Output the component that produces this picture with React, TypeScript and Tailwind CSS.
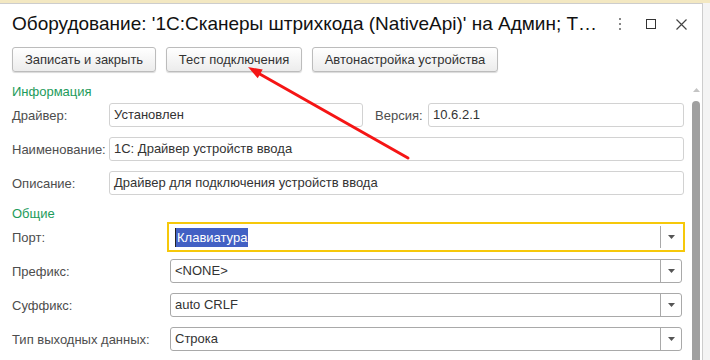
import React from 'react'

const labelCls = 'text-[13px] text-[#4d4d4d] leading-[15px]'

function TextField({ value, className }: { value: string; className: string }) {
  return (
    <div
      className={`h-[24px] flex items-center px-[4px] border border-[#d2d2d2] rounded-[3px] bg-white text-[13px] text-[#333] ${className}`}
    >
      {value}
    </div>
  )
}

function DropArrow() {
  return (
    <svg width="7" height="4" viewBox="0 0 7 4">
      <polygon points="0,0 7,0 3.5,4" fill="#555" />
    </svg>
  )
}

function SelectField({ value, focused }: { value: string; focused?: boolean }) {
  return (
    <div
      className={`w-[512px] h-[24px] flex items-stretch rounded-[3px] bg-white text-[13px] text-[#333] ${
        focused
          ? 'border border-white outline-2 outline-offset-[1px] outline-[#f6c80a] rounded-none'
          : 'border border-[#a9a9a9]'
      }`}
    >
      <div className="flex-1 flex items-center pl-[4px]">
        {focused ? (
          <span className="bg-[#4260c4] text-white px-[1px] leading-[19px] border-l border-[#222]">
            {value}
          </span>
        ) : (
          value
        )}
      </div>
      <div className="w-[21px] border-l border-[#a9a9a9] flex items-center justify-center">
        <DropArrow />
      </div>
    </div>
  )
}

export default function App() {
  const general = [
    { label: 'Порт:', value: 'Клавиатура', focused: true },
    { label: 'Префикс:', value: '<NONE>' },
    { label: 'Суффикс:', value: 'auto CRLF' },
    { label: 'Тип выходных данных:', value: 'Строка' },
  ]

  return (
    <div className="relative w-[710px] h-[360px] overflow-hidden bg-[#f4f4f4] font-['Liberation_Sans',Arial,sans-serif] flex flex-col">
      {/* window behind */}
      <div className="h-[3px] bg-[#f3e8c2] shrink-0" />

      <div className="flex-1 flex min-h-0">
        <div className="w-[703px] bg-white border-t border-r border-[#cdcdcd] flex flex-col">
          {/* Title */}
          <div className="h-[40px] flex items-center pl-[12px] shrink-0">
            <div className="flex-1 text-[19px] text-[#111] whitespace-nowrap">
              Оборудование: '1С:Сканеры штрихкода (NativeApi)' на Админ; Т…
            </div>
            <div className="flex items-center">
              <div className="flex flex-col gap-[3px] w-[2px] mr-[25px]">
                <span className="w-[2px] h-[2px] bg-[#888]" />
                <span className="w-[2px] h-[2px] bg-[#888]" />
                <span className="w-[2px] h-[2px] bg-[#888]" />
              </div>
              <div className="w-[10px] h-[10px] border-[1.5px] border-[#333] mr-[20px]" />
              <svg width="11" height="11" viewBox="0 0 11 11" className="mr-[15px]">
                <path d="M0.5 0.5 L10.5 10.5 M10.5 0.5 L0.5 10.5" stroke="#444" strokeWidth="1.2" />
              </svg>
            </div>
          </div>

          {/* Buttons */}
          <div className="flex gap-[10px] pl-[12px] mt-[3px] shrink-0">
            {['Записать и закрыть', 'Тест подключения', 'Автонастройка устройства'].map((b, i) => (
              <div
                key={b}
                className={`h-[25px] flex items-center justify-center rounded-[3px] border border-[#bcbcbc] bg-gradient-to-b from-white to-[#ececec] shadow-[0_1px_1px_rgba(0,0,0,0.15)] text-[13px] text-[#333] ${
                  i === 0 ? 'w-[144px]' : i === 1 ? 'w-[136px]' : 'w-[186px]'
                }`}
              >
                {b}
              </div>
            ))}
          </div>

          {/* Body */}
          <div className="flex-1 flex min-h-0">
            <div className="flex-1 pl-[12px] flex flex-col">
              <div className="mt-[12px] text-[13px] leading-[15px] text-[#1d9b5b]">Информация</div>

              <div className="mt-[4px] flex items-center">
                <div className={`${labelCls} w-[97px]`}>Драйвер:</div>
                <TextField value="Установлен" className="w-[254px]" />
                <div className={`${labelCls} ml-[12px] w-[53px]`}>Версия:</div>
                <TextField value="10.6.2.1" className="w-[256px]" />
              </div>

              <div className="mt-[10px] flex items-center">
                <div className={`${labelCls} w-[97px]`}>Наименование:</div>
                <TextField value="1С: Драйвер устройств ввода" className="w-[575px]" />
              </div>

              <div className="mt-[10px] flex items-center">
                <div className={`${labelCls} w-[97px]`}>Описание:</div>
                <TextField value="Драйвер для подключения устройств ввода" className="w-[575px]" />
              </div>

              <div className="mt-[11px] text-[13px] leading-[15px] text-[#1d9b5b]">Общие</div>

              {general.map((g, i) => (
                <div key={g.label} className={`flex items-center ${i === 0 ? 'mt-[4px]' : 'mt-[10px]'}`}>
                  <div className={`${labelCls} w-[158px]`}>{g.label}</div>
                  <SelectField value={g.value} focused={g.focused} />
                </div>
              ))}
            </div>

            {/* Scrollbar */}
            <div className="w-[13px] flex flex-col items-start pl-[3px] pt-[16px]">
              <div className="w-[8px] flex justify-center">
                <svg width="7" height="4" viewBox="0 0 7 4">
                  <polygon points="3.5,0 7,4 0,4" fill="#c4c4c4" />
                </svg>
              </div>
              <div className="mt-[9px] w-[8px] flex-1 bg-[#a0a0a0] rounded-t-[4px]" />
            </div>
          </div>
        </div>
      </div>

      {/* Red annotation arrow */}
      <svg className="absolute left-0 top-0 pointer-events-none" width="710" height="360">
        <line x1="408" y1="158" x2="258" y2="73" stroke="#f51515" strokeWidth="3" strokeLinecap="round" />
        <polygon points="248,67 257.7,78.2 262.7,69.6" fill="#f51515" />
      </svg>
    </div>
  )
}
